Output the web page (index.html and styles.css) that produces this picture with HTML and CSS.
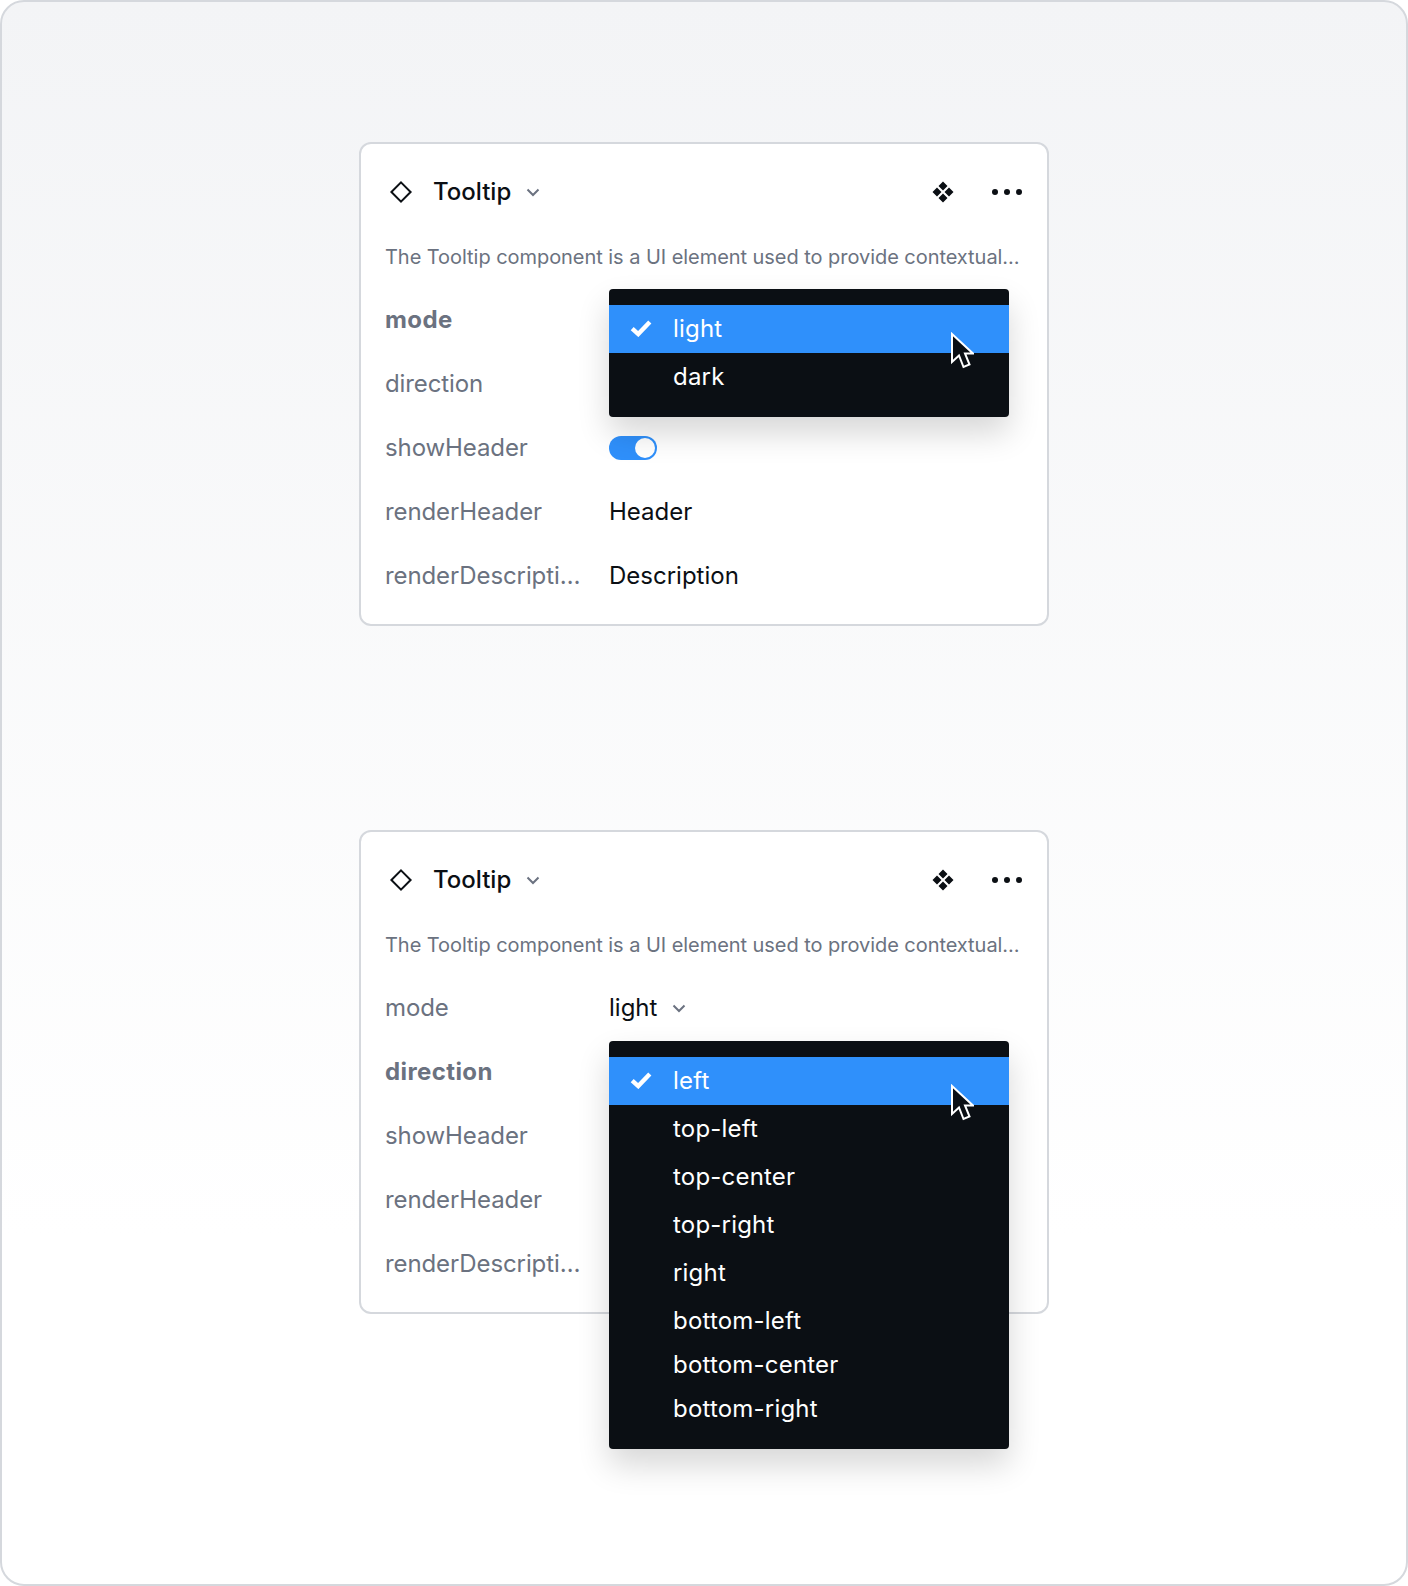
FILE: index.html
```html
<!DOCTYPE html>
<html lang="en">
<head>
<meta charset="utf-8">
<title>Tooltip</title>
<link rel="stylesheet" href="styles.css">
</head>
<body>
<main class="frame">

<section class="card">
  <header class="head">
    <svg class="i-diamond" viewBox="0 0 24 24"><path d="M12 2.400 21.600 12 12 21.600 2.400 12Z"/></svg>
    <h2 class="title">Tooltip</h2>
    <svg class="i-chev" viewBox="0 0 16 16"><path d="M2.500 5.500 8 11l5.500-5.500"/></svg>
    <span class="spacer"></span>
    <svg class="i-comp" viewBox="0 0 24 24"><path d="M12 1.500 16.500 6 12 10.500 7.500 6ZM6 7.500 10.500 12 6 16.500 1.500 12ZM18 7.500 22.500 12 18 16.500 13.500 12ZM12 13.500 16.500 18 12 22.500 7.500 18Z"/></svg>
    <svg class="i-more" viewBox="0 0 32 8"><circle cx="4" cy="4" r="3"/><circle cx="16" cy="4" r="3"/><circle cx="28" cy="4" r="3"/></svg>
  </header>
  <p class="desc">The Tooltip component is a UI element used to provide contextual…</p>
  <div class="row">
    <span class="label label-active">mode</span>
    <div class="value">
      <div class="menu">
        <div class="item item-on">
          <svg class="i-check" viewBox="0 0 20 16"><path d="M2 8.500 7.500 13.500 18 2.500"/></svg>
          <span>light</span>
          <svg class="i-cursor" viewBox="0 0 24 38"><path d="M2 2V30L9 23.500 13.500 35 19.500 32.500 15 21.500H23Z"/></svg>
        </div>
        <div class="item">dark</div>
      </div>
    </div>
  </div>
  <div class="row"><span class="label">direction</span><div class="value"></div></div>
  <div class="row"><span class="label">showHeader</span><div class="value"><span class="toggle"><span class="knob"></span></span></div></div>
  <div class="row"><span class="label">renderHeader</span><div class="value">Header</div></div>
  <div class="row"><span class="label">renderDescripti…</span><div class="value">Description</div></div>
</section>

<section class="card">
  <header class="head">
    <svg class="i-diamond" viewBox="0 0 24 24"><path d="M12 2.400 21.600 12 12 21.600 2.400 12Z"/></svg>
    <h2 class="title">Tooltip</h2>
    <svg class="i-chev" viewBox="0 0 16 16"><path d="M2.500 5.500 8 11l5.500-5.500"/></svg>
    <span class="spacer"></span>
    <svg class="i-comp" viewBox="0 0 24 24"><path d="M12 1.500 16.500 6 12 10.500 7.500 6ZM6 7.500 10.500 12 6 16.500 1.500 12ZM18 7.500 22.500 12 18 16.500 13.500 12ZM12 13.500 16.500 18 12 22.500 7.500 18Z"/></svg>
    <svg class="i-more" viewBox="0 0 32 8"><circle cx="4" cy="4" r="3"/><circle cx="16" cy="4" r="3"/><circle cx="28" cy="4" r="3"/></svg>
  </header>
  <p class="desc">The Tooltip component is a UI element used to provide contextual…</p>
  <div class="row">
    <span class="label">mode</span>
    <div class="value select">light <svg class="i-chev" viewBox="0 0 16 16"><path d="M2.500 5.500 8 11l5.500-5.500"/></svg></div>
  </div>
  <div class="row">
    <span class="label label-active">direction</span>
    <div class="value">
      <div class="menu">
        <div class="item item-on">
          <svg class="i-check" viewBox="0 0 20 16"><path d="M2 8.500 7.500 13.500 18 2.500"/></svg>
          <span>left</span>
          <svg class="i-cursor" viewBox="0 0 24 38"><path d="M2 2V30L9 23.500 13.500 35 19.500 32.500 15 21.500H23Z"/></svg>
        </div>
        <div class="item">top-left</div>
        <div class="item">top-center</div>
        <div class="item">top-right</div>
        <div class="item">right</div>
        <div class="item item-short item-first-short">bottom-left</div>
        <div class="item item-short">bottom-center</div>
        <div class="item item-short">bottom-right</div>
      </div>
    </div>
  </div>
  <div class="row"><span class="label">showHeader</span><div class="value"></div></div>
  <div class="row"><span class="label">renderHeader</span><div class="value"></div></div>
  <div class="row"><span class="label">renderDescripti…</span><div class="value"></div></div>
</section>

</main>
</body>
</html>
```

FILE: styles.css
```css
* { box-sizing: border-box; }

html, body { margin: 0; padding: 0; }

body {
  font-family: Inter, "Liberation Sans", sans-serif;
  color: #0b0f14;
}

.frame {
  width: 1408px;
  height: 1586px;
  padding-top: 140px;
  border: 2px solid #d5d8dd;
  border-radius: 24px;
  background: linear-gradient(#f3f4f6 0, #ffffff 78%);
  display: flex;
  flex-direction: column;
  align-items: center;
  gap: 204px;
}

.card {
  width: 690px;
  height: 484px;
  padding: 0 24px;
  background: #fff;
  border: 2px solid #d5d8dd;
  border-radius: 12px;
}

.head {
  height: 96px;
  display: flex;
  align-items: center;
}

.i-diamond {
  width: 24px;
  height: 24px;
  margin-left: 4px;
  fill: none;
  stroke: #0b0f14;
  stroke-width: 2;
}

.title {
  margin: 0 0 0 20px;
  font-size: 24px;
  font-weight: 500;
  line-height: 32px;
}

.i-chev {
  width: 16px;
  height: 16px;
  margin-left: 14px;
  fill: none;
  stroke: #6b7280;
  stroke-width: 2;
}

.spacer { flex: 1; }

.i-comp {
  width: 24px;
  height: 24px;
  fill: #0b0f14;
  margin-right: 36px;
}

.i-more {
  width: 32px;
  height: 8px;
  fill: #0b0f14;
}

.desc {
  margin: 0;
  height: 34px;
  padding-top: 1px;
  line-height: 32px;
  font-size: 20px;
  letter-spacing: -0.05px;
  color: #6b7280;
  white-space: nowrap;
}

.row {
  display: flex;
  align-items: center;
  height: 64px;
  font-size: 24px;
}

.desc + .row { margin-top: 13px; }

.label {
  width: 224px;
  flex: none;
  color: #6b7280;
  letter-spacing: -0.1px;
  white-space: nowrap;
}

.label-active {
  font-weight: 700;
  letter-spacing: 0.4px;
}

.value {
  flex: 1;
  position: relative;
  display: flex;
  align-items: center;
}

.select .i-chev {
  margin-left: 14px;
  margin-top: 2px;
}

.toggle {
  width: 48px;
  height: 24px;
  margin-top: 2px;
  padding: 2px;
  border-radius: 12px;
  background: #2f90fb;
  display: flex;
  justify-content: flex-end;
}

.knob {
  width: 20px;
  height: 20px;
  border-radius: 50%;
  background: #fff;
}

.menu {
  position: absolute;
  left: 0;
  top: -30px;
  z-index: 2;
  width: 400px;
  padding: 16px 0;
  background: #0b0f14;
  border-radius: 4px;
  color: #fff;
  letter-spacing: 0.2px;
  box-shadow: 0 16px 32px rgba(0, 0, 0, 0.16);
}

.item {
  position: relative;
  height: 48px;
  padding: 0 0 2px 64px;
  display: flex;
  align-items: center;
}

.item-short { height: 44px; }
.item-first-short { margin-top: 2px; }
.item-short:last-child { margin-bottom: 2px; }

.item-on { background: #2f90fb; }

.i-check {
  position: absolute;
  left: 21px;
  top: 14px;
  width: 22px;
  height: 18px;
  fill: none;
  stroke: #fff;
  stroke-width: 4;
}

.i-cursor {
  position: absolute;
  left: 341px;
  top: 27px;
  width: 24px;
  height: 38px;
  fill: #0b0f14;
  stroke: #fff;
  stroke-width: 2;
  z-index: 1;
}
```
